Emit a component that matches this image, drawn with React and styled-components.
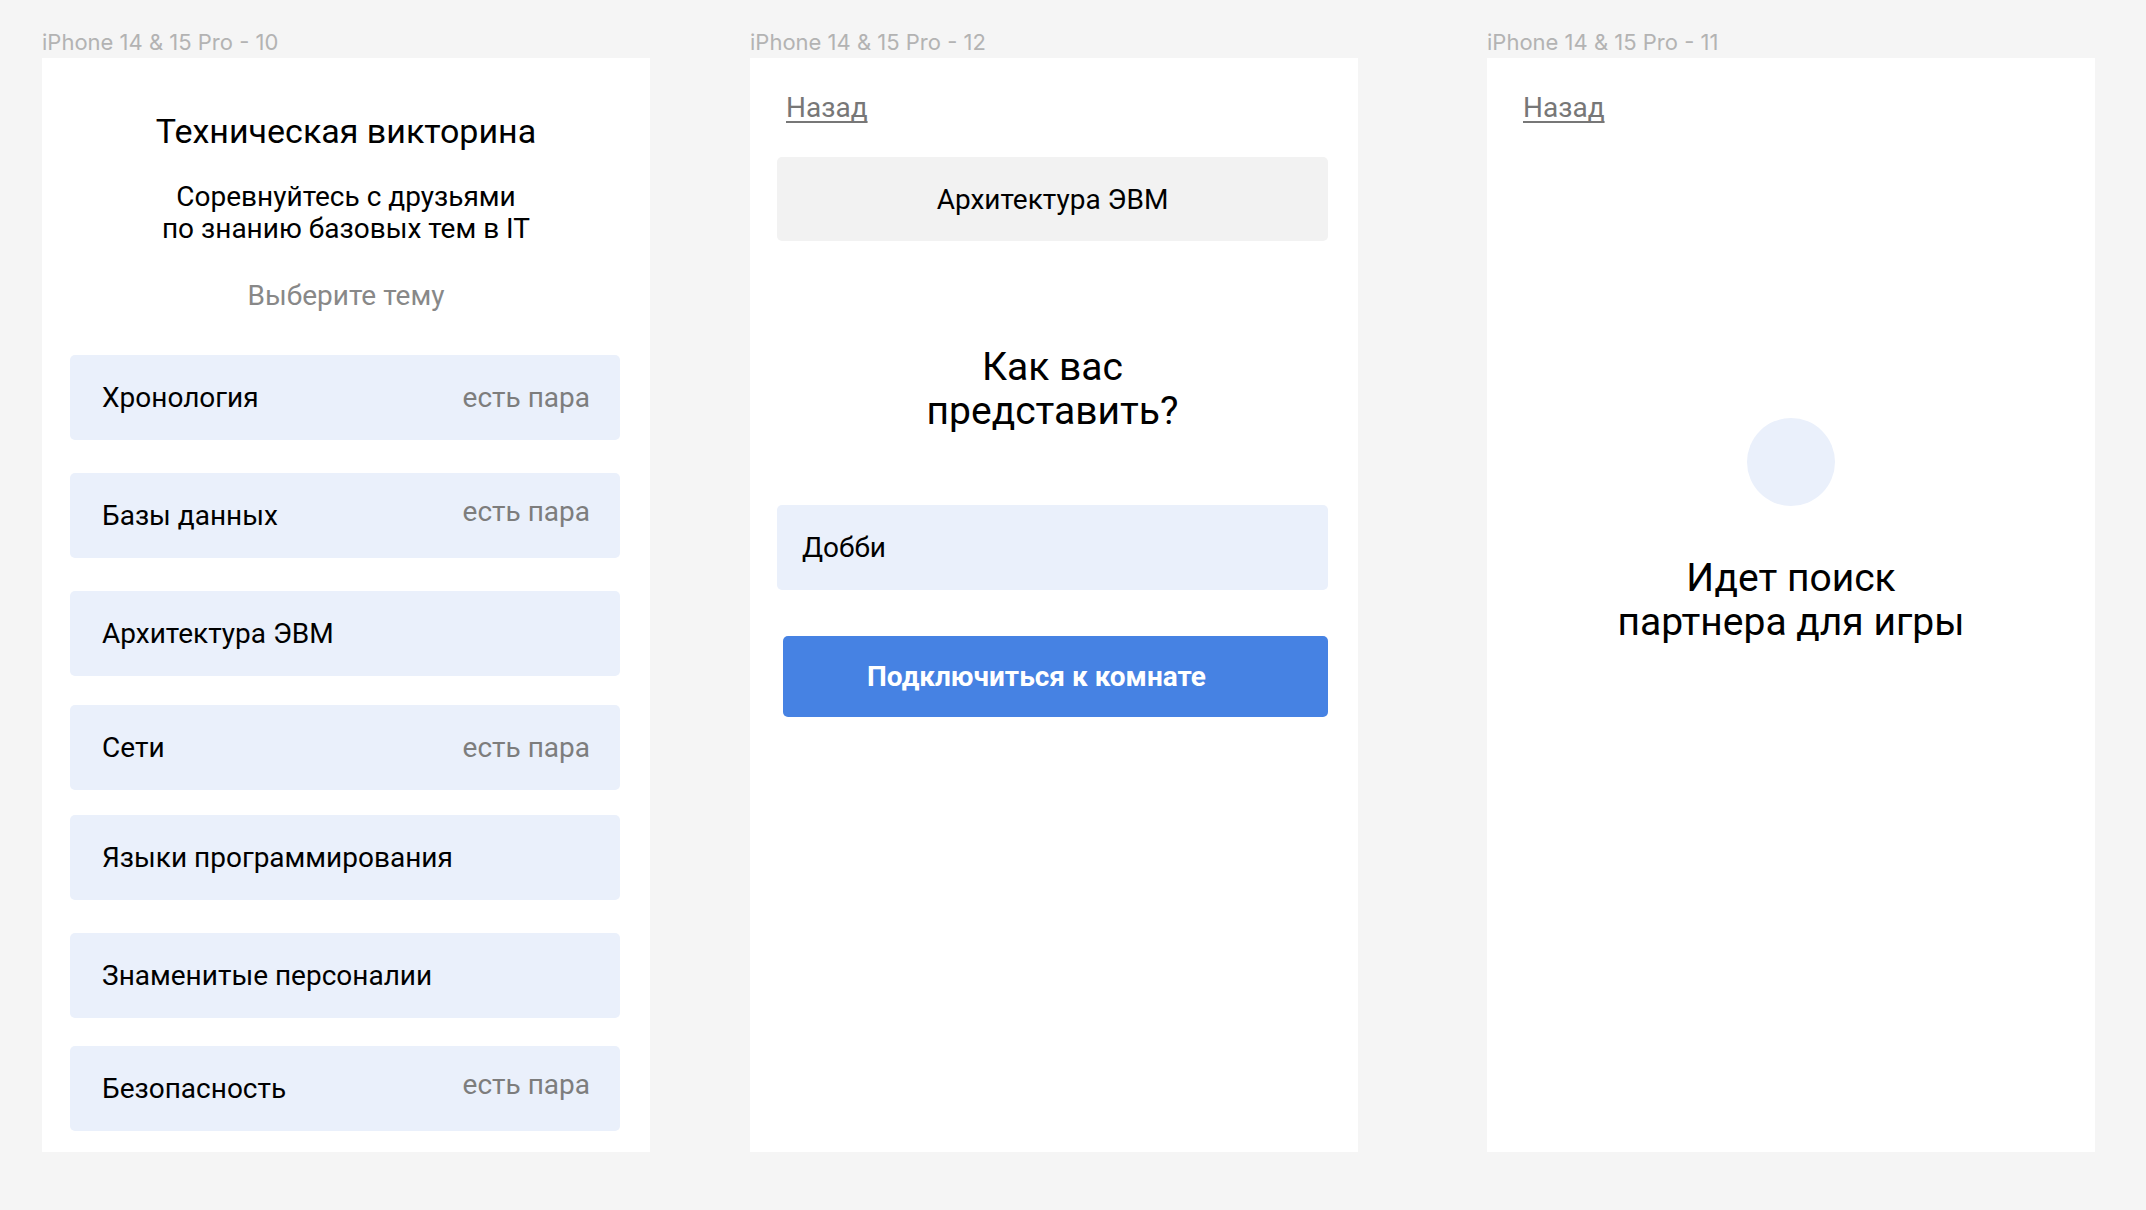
import React from "react";
import styled, { createGlobalStyle } from "styled-components";

const GlobalStyle = createGlobalStyle`
  html, body {
    margin: 0;
    padding: 0;
    background: #f5f5f5;
  }
  body {
    font-family: Roboto, "Noto Sans", Arial, sans-serif;
    color: #000;
  }
`;

// Canvas with the three phone frames side by side
const Canvas = styled.div`
  display: flex;
  align-items: flex-start;
  padding: 29px 0 0 42px;
  width: 2146px;
  height: 1210px;
  box-sizing: border-box;
`;

const Artboard = styled.section`
  display: flex;
  flex-direction: column;
  margin-right: ${(p) => p.$gap || 0}px;
`;

const ArtboardLabel = styled.div`
  font-family: Inter, "Noto Sans", sans-serif;
  font-size: 22px;
  line-height: 26px;
  color: #b3b3b3;
  margin-bottom: 3px;
  white-space: nowrap;
`;

const Frame = styled.div`
  width: 608px;
  height: 1094px;
  background: #fff;
  box-sizing: border-box;
  display: flex;
  flex-direction: column;
`;

/* ---------- frame 10: topic list ---------- */

const Title = styled.h1`
  margin: 53px 0 0;
  font-size: 34px;
  line-height: 40px;
  font-weight: 400;
  text-align: center;
`;

const Subtitle = styled.p`
  margin: 30px 0 0;
  font-size: 28px;
  line-height: 32px;
  text-align: center;
`;

const Hint = styled.p`
  margin: 35px 0 0;
  font-size: 28px;
  line-height: 32px;
  color: #888;
  text-align: center;
`;

const TopicList = styled.ul`
  list-style: none;
  margin: 43px 0 0;
  padding: 0 30px 0 28px;
  display: flex;
  flex-direction: column;
`;

const Topic = styled.li`
  height: 85px;
  margin-top: ${(p) => p.$space || 0}px;
  background: #eaf0fb;
  border-radius: 5px;
  display: flex;
  align-items: center;
  justify-content: space-between;
  padding: 0 30px 0 32px;
  font-size: 28px;
`;

const PairTag = styled.span`
  color: #7d7d7d;
  margin-top: ${(p) => (p.$raised ? "-9px" : "0")};
`;

/* ---------- shared ---------- */

const BackLink = styled.a`
  align-self: flex-start;
  margin: 30px 0 0 36px;
  font-size: 28px;
  line-height: 40px;
  color: #777;
  text-decoration: underline;
  text-decoration-thickness: 1.5px;
  text-underline-offset: 4px;
`;

const Heading = styled.h2`
  font-size: 39px;
  line-height: 44px;
  font-weight: 400;
  text-align: center;
  margin: ${(p) => p.$margin || "0"};
`;

/* ---------- frame 12: name form ---------- */

const FormBody = styled.div`
  display: flex;
  flex-direction: column;
  padding: 0 30px 0 27px;
`;

const TopicBadge = styled.div`
  margin-top: 29px;
  height: 84px;
  background: #f2f2f2;
  border-radius: 5px;
  display: flex;
  align-items: center;
  justify-content: center;
  font-size: 28px;
`;

const NameInput = styled.div`
  margin-top: 72px;
  height: 85px;
  background: #eaf0fb;
  border-radius: 5px;
  display: flex;
  align-items: center;
  padding: 0 25px;
  font-size: 28px;
`;

const JoinButton = styled.button`
  margin: 46px 0 0 6px;
  height: 81px;
  border: none;
  border-radius: 5px;
  background: #4682e3;
  color: #fff;
  font-family: Roboto, sans-serif;
  font-size: 28px;
  font-weight: 700;
  padding: 0 38px 0 0;
  cursor: pointer;
`;

/* ---------- frame 11: search ---------- */

const SearchBody = styled.div`
  display: flex;
  flex-direction: column;
  align-items: center;
`;

const Spinner = styled.div`
  width: 88px;
  height: 88px;
  border-radius: 50%;
  background: #eaf0fb;
  margin-top: 290px;
`;

const topics = [
  { name: "Хронология", pair: true, space: 0 },
  { name: "Базы данных", pair: true, raised: true, space: 33 },
  { name: "Архитектура ЭВМ", space: 33 },
  { name: "Сети", pair: true, space: 29 },
  { name: "Языки программирования", space: 25 },
  { name: "Знаменитые персоналии", space: 33 },
  { name: "Безопасность", pair: true, raised: true, space: 28 },
];

export default function App() {
  return (
    <>
      <GlobalStyle />
      <Canvas>
        <Artboard $gap={100}>
          <ArtboardLabel>iPhone 14 &amp; 15 Pro - 10</ArtboardLabel>
          <Frame>
            <Title>Техническая викторина</Title>
            <Subtitle>
              Соревнуйтесь с друзьями
              <br />
              по знанию базовых тем в IT
            </Subtitle>
            <Hint>Выберите тему</Hint>
            <TopicList>
              {topics.map((t) => (
                <Topic key={t.name} $space={t.space}>
                  <span>{t.name}</span>
                  {t.pair && <PairTag $raised={t.raised}>есть пара</PairTag>}
                </Topic>
              ))}
            </TopicList>
          </Frame>
        </Artboard>

        <Artboard $gap={129}>
          <ArtboardLabel>iPhone 14 &amp; 15 Pro - 12</ArtboardLabel>
          <Frame>
            <BackLink>Назад</BackLink>
            <FormBody>
              <TopicBadge>Архитектура ЭВМ</TopicBadge>
              <Heading $margin="104px 0 0">
                Как вас
                <br />
                представить?
              </Heading>
              <NameInput>Добби</NameInput>
              <JoinButton>Подключиться к комнате</JoinButton>
            </FormBody>
          </Frame>
        </Artboard>

        <Artboard>
          <ArtboardLabel>iPhone 14 &amp; 15 Pro - 11</ArtboardLabel>
          <Frame>
            <BackLink>Назад</BackLink>
            <SearchBody>
              <Spinner />
              <Heading $margin="50px 0 0">
                Идет поиск
                <br />
                партнера для игры
              </Heading>
            </SearchBody>
          </Frame>
        </Artboard>
      </Canvas>
    </>
  );
}
